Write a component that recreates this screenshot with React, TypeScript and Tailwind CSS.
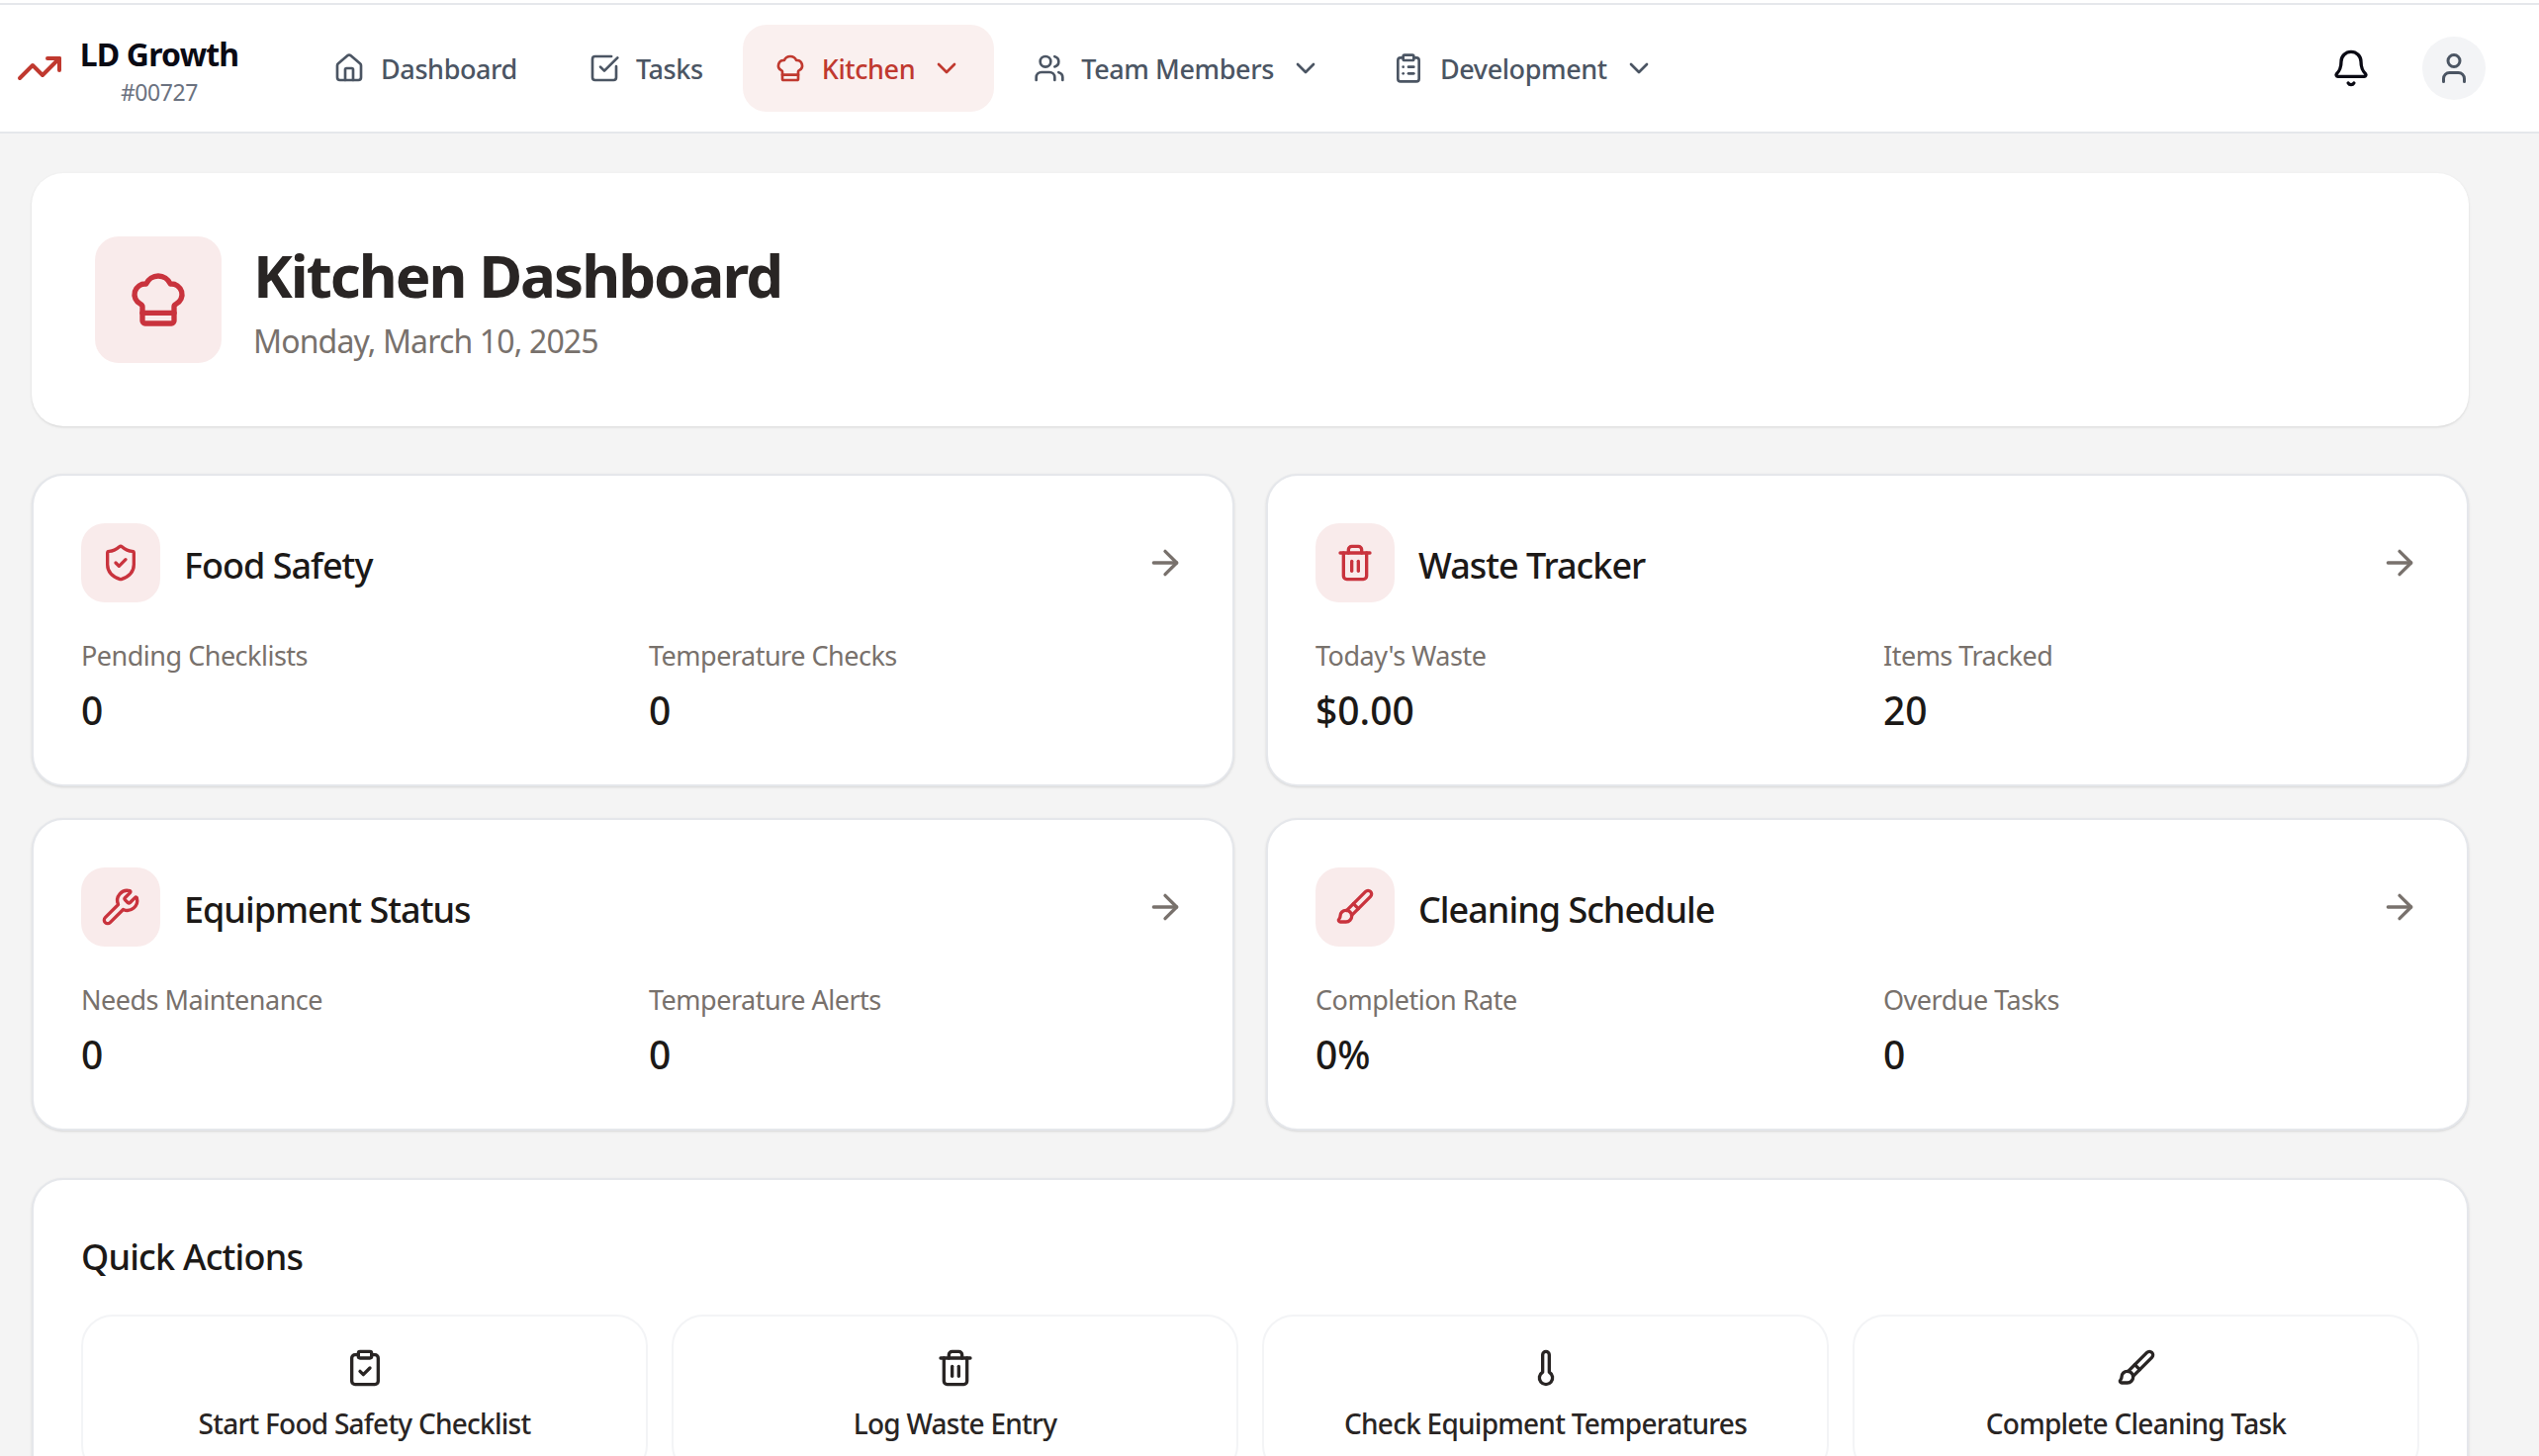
import {
  ArrowRight,
  Bell,
  Brush,
  ChefHat,
  ChevronDown,
  ClipboardCheck,
  ClipboardList,
  House,
  ShieldCheck,
  SquareCheckBig,
  Thermometer,
  Trash2,
  TrendingUp,
  User,
  Users,
  Wrench,
} from "lucide-react";
import type { LucideIcon } from "lucide-react";

type NavItem = {
  label: string;
  icon: LucideIcon;
  chevron?: boolean;
  active?: boolean;
};

type Card = {
  title: string;
  icon: LucideIcon;
  stats: [string, string][];
};

const navItems: NavItem[] = [
  { label: "Dashboard", icon: House },
  { label: "Tasks", icon: SquareCheckBig },
  { label: "Kitchen", icon: ChefHat, chevron: true, active: true },
  { label: "Team Members", icon: Users, chevron: true },
  { label: "Development", icon: ClipboardList, chevron: true },
];

const cards: Card[] = [
  {
    title: "Food Safety",
    icon: ShieldCheck,
    stats: [
      ["Pending Checklists", "0"],
      ["Temperature Checks", "0"],
    ],
  },
  {
    title: "Waste Tracker",
    icon: Trash2,
    stats: [
      ["Today's Waste", "$0.00"],
      ["Items Tracked", "20"],
    ],
  },
  {
    title: "Equipment Status",
    icon: Wrench,
    stats: [
      ["Needs Maintenance", "0"],
      ["Temperature Alerts", "0"],
    ],
  },
  {
    title: "Cleaning Schedule",
    icon: Brush,
    stats: [
      ["Completion Rate", "0%"],
      ["Overdue Tasks", "0"],
    ],
  },
];

const actions: { label: string; icon: LucideIcon }[] = [
  { label: "Start Food Safety Checklist", icon: ClipboardCheck },
  { label: "Log Waste Entry", icon: Trash2 },
  { label: "Check Equipment Temperatures", icon: Thermometer },
  { label: "Complete Cleaning Task", icon: Brush },
];

function NavLink({ item }: { item: NavItem }) {
  const Icon = item.icon;
  return (
    <div
      className={`flex h-[88px] items-center gap-4 rounded-3xl px-8 text-[27px] font-medium tracking-[-0.4px] ${
        item.active ? "bg-[#faf0ef] text-[#c0392f]" : "text-[#4b5563]"
      }`}
    >
      <Icon size={32} />
      <span className="pt-[2px]">{item.label}</span>
      {item.chevron ? <ChevronDown size={32} /> : null}
    </div>
  );
}

function StatCard({ card }: { card: Card }) {
  const Icon = card.icon;
  return (
    <div className="rounded-[32px] border-2 border-[#e5e7eb] bg-white p-12 shadow-sm">
      <div className="flex items-center justify-between">
        <div className="flex items-center gap-6">
          <div className="flex h-20 w-20 items-center justify-center rounded-3xl bg-[#f9ebeb] text-[#c9333d]">
            <Icon size={40} />
          </div>
          <h3 className="pt-[5px] text-[36px] leading-[56px] font-medium tracking-[-1px] text-[#1c1917]">{card.title}</h3>
        </div>
        <ArrowRight size={40} className="text-[#78716c]" />
      </div>
      <div className="mt-8 grid grid-cols-2 gap-x-8">
        {card.stats.map(([label, value]) => (
          <div key={label}>
            <p className="pt-[2px] text-[27px] leading-10 tracking-[-0.5px] text-[#78716c]">{label}</p>
            <p className="mt-2 text-[39px] leading-[54px] font-medium text-[#1c1917]">{value}</p>
          </div>
        ))}
      </div>
    </div>
  );
}

export default function App() {
  return (
    <div className="h-[1472px] overflow-hidden bg-[#f4f4f4] font-['Noto_Sans','Open_Sans',sans-serif]">
      <div className="h-[3px] bg-white" />
      <header className="flex h-[132px] items-center justify-between border-t-2 border-b-2 border-[#e5e7eb] bg-white pr-[54px] pl-4">
        <div className="flex items-center">
          <div className="flex items-center">
            <TrendingUp size={48} className="text-[#c0392f]" />
            <div className="ml-[18px] flex w-[158px] flex-col items-center pt-[3px]">
              <span className="text-[32px] leading-[44px] font-bold tracking-[-0.8px] whitespace-nowrap text-[#0a0a14]">LD Growth</span>
              <span className="text-[23px] leading-8 tracking-[-0.4px] text-[#6b7280]">#00727</span>
            </div>
          </div>
          <nav className="ml-[65px] flex items-center gap-2">
            {navItems.map((item) => (
              <NavLink key={item.label} item={item} />
            ))}
          </nav>
        </div>
        <div className="flex items-center gap-[52px]">
          <Bell size={40} className="text-[#0a0a14]" />
          <div className="flex h-16 w-16 items-center justify-center rounded-full bg-[#f3f4f6] text-[#4b5563]">
            <User size={36} />
          </div>
        </div>
      </header>

      <main className="pt-10 pr-[71px] pl-8">
        <section className="flex items-center gap-8 rounded-[32px] bg-white p-16 shadow-sm">
          <div className="flex h-32 w-32 items-center justify-center rounded-3xl bg-[#f9ebeb] text-[#c9333d]">
            <ChefHat size={64} />
          </div>
          <div>
            <h1 className="text-[60px] leading-[72px] font-bold tracking-[-2px] text-[#292524]">Kitchen Dashboard</h1>
            <p className="mt-3 text-[32px] leading-[38px] tracking-[-0.85px] text-[#78716c]">Monday, March 10, 2025</p>
          </div>
        </section>

        <div className="mt-12 grid grid-cols-2 gap-8">
          {cards.map((card) => (
            <StatCard key={card.title} card={card} />
          ))}
        </div>

        <section className="mt-12 rounded-[32px] border-2 border-[#e5e7eb] bg-white p-12 shadow-sm">
          <h2 className="pt-[4px] text-[36px] leading-[52px] font-medium tracking-[-0.8px] text-[#1c1917]">Quick Actions</h2>
          <div className="mt-8 grid grid-cols-4 gap-6">
            {actions.map(({ label, icon: Icon }) => (
              <div key={label} className="flex flex-col items-center rounded-[32px] border-2 border-[#f3f4f6] p-8 text-[#292524]">
                <Icon size={40} />
                <span className="mt-4 text-[28px] leading-10 font-medium tracking-[-0.75px]">{label}</span>
              </div>
            ))}
          </div>
        </section>
      </main>
    </div>
  );
}
